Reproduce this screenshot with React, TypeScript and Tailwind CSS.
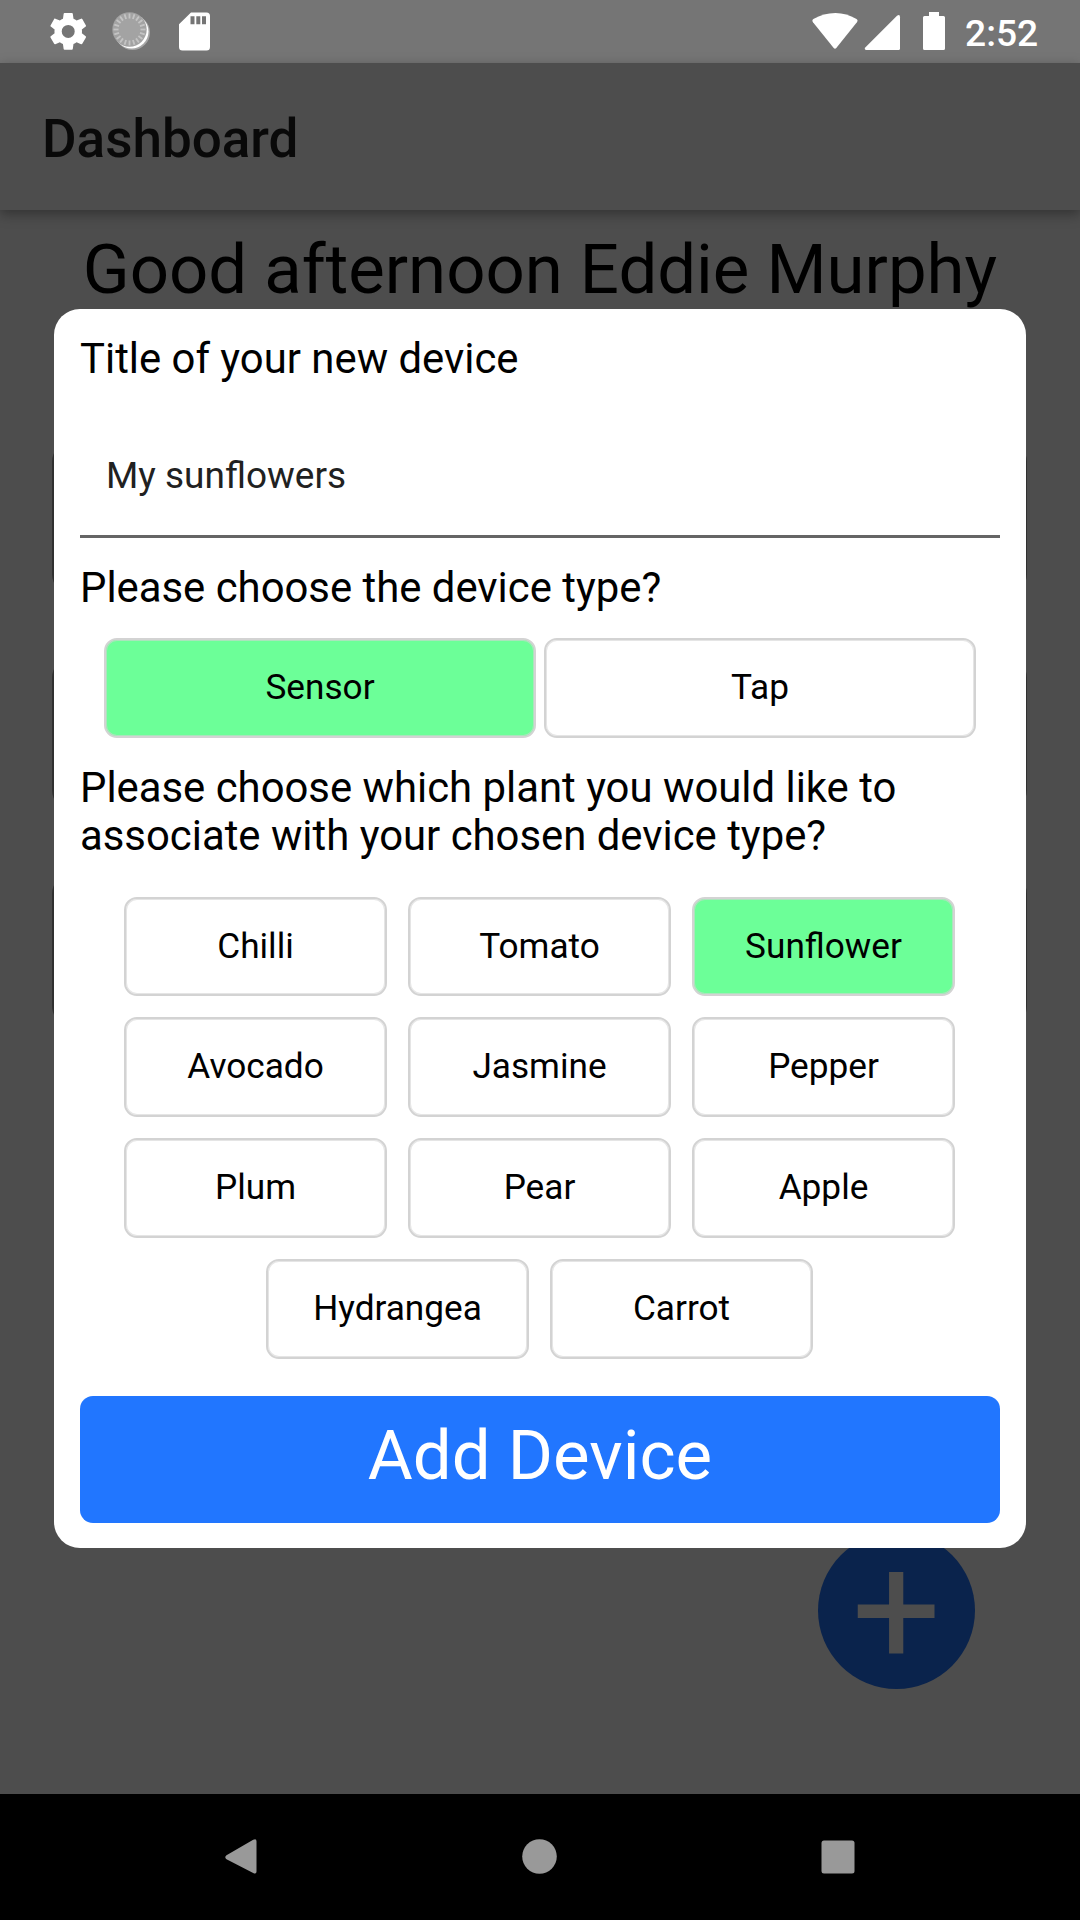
import React from "react";

const deviceTypes = ["Sensor", "Tap"];
const plantRows = [
  ["Chilli", "Tomato", "Sunflower"],
  ["Avocado", "Jasmine", "Pepper"],
  ["Plum", "Pear", "Apple"],
  ["Hydrangea", "Carrot"],
];
const selected = ["Sensor", "Sunflower"];

const spinnerTicks = Array.from({ length: 20 }, (_, i) => i * 18);

function Choice({ label, size }: { label: string; size: string }) {
  const fill = selected.includes(label) ? "bg-[#6cff98]" : "bg-white";
  return (
    <button
      className={`${size} ${fill} flex items-center justify-center rounded-[13px] border-2 border-[#d3d3d3] pb-[2px] text-[35.2px] leading-[42px] text-black shadow-[inset_0_0_0_1px_rgba(211,211,211,0.6)]`}
    >
      {label}
    </button>
  );
}

function StatusBar() {
  return (
    <div className="flex h-[63px] items-start justify-between bg-[#757575] text-white">
      <svg width="220" height="63" viewBox="0 0 220 63" fill="currentColor">
        <g transform="translate(45.3 8.5) scale(1.91)">
          <path d="M19.14 12.94c.04-.3.06-.61.06-.94 0-.32-.02-.64-.07-.94l2.03-1.58a.49.49 0 0 0 .12-.61l-1.92-3.32a.488.488 0 0 0-.59-.22l-2.39.96c-.5-.38-1.03-.7-1.62-.94l-.36-2.54a.484.484 0 0 0-.48-.41h-3.84c-.24 0-.43.17-.47.41l-.36 2.54c-.59.24-1.13.57-1.62.94l-2.39-.96c-.22-.08-.47 0-.59.22L2.74 8.87c-.12.21-.08.47.12.61l2.03 1.58c-.05.3-.09.63-.09.94s.02.64.07.94l-2.03 1.58a.49.49 0 0 0-.12.61l1.92 3.32c.12.22.37.29.59.22l2.39-.96c.5.38 1.03.7 1.62.94l.36 2.54c.05.24.24.41.48.41h3.84c.24 0 .44-.17.47-.41l.36-2.54c.59-.24 1.13-.56 1.62-.94l2.39.96c.22.08.47 0 .59-.22l1.92-3.32c.12-.22.07-.47-.12-.61l-2.01-1.58zM12 15.4a3.4 3.4 0 1 1 0-6.8 3.4 3.4 0 0 1 0 6.8z" />
        </g>
        <circle cx="132.5" cy="32.5" r="17.5" fill="#a6a6a6" />
        <circle cx="131.5" cy="31.5" r="17" fill="#fff" />
        <circle cx="129.5" cy="29.5" r="17.2" fill="#a3a3a3" />
        <g stroke="#c4c4c4" strokeWidth="1.8">
          {spinnerTicks.map((a) => (
            <line key={a} x1="129.5" y1="13.5" x2="129.5" y2="18.5" transform={`rotate(${a} 129.5 29.5)`} />
          ))}
        </g>
        <path fillRule="evenodd" d="M191 12.5h15.500a3.500 3.500 0 0 1 3.500 3.500v31a3.500 3.500 0 0 1-3.500 3.500h-24a3.500 3.500 0 0 1-3.500-3.500V24.200zM190.500 16.300v8h4v-8zm5.800 0v8h4v-8zm5.700 0v8h4v-8z" />
      </svg>
      <div className="flex items-start">
        <svg width="160" height="63" viewBox="0 0 160 63" fill="currentColor">
          <path d="M9 22.300q-1.500-2 .4-3.200Q19.500 13 31.500 13q11 0 21 6.100q1.900 1.200.4 3.200L32.300 47.900q-1.300 1.600-2.600 0z" />
          <path d="M61.500 47.300 93 15.800q3-2 3 1.400V48.500q0 1.500-1.500 1.500H62.500q-3-.4-1-2.700z" />
          <path d="M125 12h10v4h4.500q1.500 0 1.500 1.500v31q0 1.500-1.500 1.500h-19q-1.500 0-1.500-1.500v-31q0-1.500 1.500-1.500h4.500z" />
        </svg>
        <span className="w-[116px] pl-[1px] pt-[11px] text-[37.2px] font-medium leading-[44px]">2:52</span>
      </div>
    </div>
  );
}

function NavBar() {
  return (
    <div className="bg-black">
      <svg className="block" width="1080" height="126" viewBox="0 0 1080 126" fill="#999999">
        <path d="M226.500 61.200 253.200 45.800q3.300-1.500 3.300 1.500V77.500q0 3-3.300 1.500L226.500 65.200q-2.500-2 0-4z" />
        <circle cx="539.500" cy="62.500" r="17.300" />
        <rect x="821.500" y="46.500" width="33" height="33" rx="2.500" />
      </svg>
    </div>
  );
}

export default function App() {
  return (
    <div className="flex h-[1920px] w-[1080px] flex-col overflow-hidden bg-[#4d4d4d] font-['Roboto',sans-serif]">
      <StatusBar />
      <header className="relative flex h-[147px] items-center bg-[#4d4d4d] pl-[42px] pt-[6px] text-[53px] font-medium text-[#090909] shadow-[0_4px_12px_rgba(0,0,0,0.35)]">
        Dashboard
      </header>
      <main className="relative flex flex-1 flex-col items-center">
        <h1 className="whitespace-nowrap pt-[20px] text-[68.9px] leading-[80px] text-black">Good afternoon Eddie Murphy</h1>
        <div className="mr-[1px] mt-[132px] flex w-[975px] flex-col gap-[64px]">
          <div className="h-[152px] rounded-[20px] border-[3px] border-[#303030]" />
          <div className="h-[152px] rounded-[20px] border-[3px] border-[#303030]" />
          <div className="h-[152px] rounded-[20px] border-[3px] border-[#303030]" />
        </div>
        <div className="absolute bottom-[105px] right-[105px] flex size-[157px] items-center justify-center rounded-full bg-[#0a234c] pt-[2px] text-[157.500px] leading-none text-[#4d4d4d]">
          +
        </div>
        <section className="absolute left-[54px] top-[99px] flex h-[1239px] w-[972px] flex-col rounded-[26px] bg-white px-[26px] text-[41.85px] leading-[48px] text-black">
          <p className="mt-[26px]">Title of your new device</p>
          <div className="mt-[29px] flex h-[126px] items-center border-b-[3px] border-[#656565] px-[26px] pt-[4px] text-[37px] text-[#212121]">
            My sunflowers
          </div>
          <p className="mt-[26px]">Please choose the device type?</p>
          <div className="mt-[26px] flex justify-center gap-[8px]">
            {deviceTypes.map((t) => (
              <Choice key={t} label={t} size="h-[100px] w-[432px]" />
            ))}
          </div>
          <p className="mt-[26px]">Please choose which plant you would like to associate with your chosen device type?</p>
          <div className="mt-[37px] flex flex-col gap-[21px] pr-[1px]">
            {plantRows.map((row, i) => (
              <div key={row[0]} className="flex justify-center gap-[21px]">
                {row.map((p) => (
                  <Choice key={p} label={p} size={i === 0 ? "h-[99px] w-[263px]" : "h-[100px] w-[263px]"} />
                ))}
              </div>
            ))}
          </div>
          <button className="mt-[37px] h-[127px] rounded-[13px] bg-[#2176ff] pb-[7px] text-[69px] leading-[80px] text-white">
            Add Device
          </button>
        </section>
      </main>
      <NavBar />
    </div>
  );
}
